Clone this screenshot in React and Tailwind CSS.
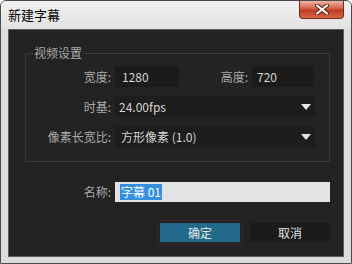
import React from "react";

const font = { fontFamily: '"Noto Sans CJK SC", "Noto Sans", sans-serif' };

function Caret() {
  return (
    <svg width="10" height="6" viewBox="0 0 10 6" className="block">
      <path d="M0 0 L10 0 L5 6 Z" fill="#e6e6e6" />
    </svg>
  );
}

function Label({ children, w = "w-[85px]" }) {
  return (
    <div className={`${w} shrink-0 text-right text-[12px] leading-none text-[#a9a9a9]`}>{children}</div>
  );
}

export default function App() {
  return (
    <div
      className="w-[352px] h-[264px] bg-[#dcdcdc] border border-[#4a4a4a] rounded-t-[6px] flex flex-col overflow-hidden"
      style={font}
    >
      <div className="h-[28px] shrink-0 flex items-start justify-between bg-[linear-gradient(#f0f0f0,#e2e2e2)]">
        <div className="ml-[7px] mt-[6px] text-[13px] leading-[16px] text-black">新建字幕</div>
        <div className="mr-[7px] w-[45px] h-[18px] rounded-b-[4px] border border-t-0 border-[#7a2a1c] bg-[linear-gradient(#eeb3a3,#d76a52_40%,#c03c24_55%,#d56845)] flex items-center justify-center">
          <svg width="14" height="11" viewBox="0 0 14 11">
            <path d="M2 1.5 L12 9.5 M12 1.5 L2 9.5" stroke="#5a1a10" strokeWidth="4" strokeLinecap="round" />
            <path d="M2 1.5 L12 9.5 M12 1.5 L2 9.5" stroke="#ffffff" strokeWidth="2.2" strokeLinecap="round" />
          </svg>
        </div>
      </div>
      <div className="mx-[7px] flex-1 mb-[6px] bg-[#232323] border border-[#5e5e5e] flex flex-col">
        <fieldset className="ml-[16px] mr-[13px] mt-[16px] border border-[#3a3a3a] pt-[6px] pb-[14px] flex flex-col gap-[9px]">
          <legend className="ml-[7px] px-[1px] text-[12px] leading-[14px] text-[#a9a9a9]">视频设置</legend>
          <div className="h-[21px] flex items-center">
            <Label>宽度:</Label>
            <div className="ml-[4px] w-[64px] h-full bg-[#1b1b1b] flex items-center pl-[7px] text-[12px] text-[#d4d4d4]">1280</div>
            <Label w="w-[69px]">高度:</Label>
            <div className="ml-[4px] w-[62px] h-full bg-[#1b1b1b] flex items-center pl-[5px] text-[12px] text-[#d4d4d4]">720</div>
          </div>
          <div className="h-[21px] flex items-center">
            <Label>时基:</Label>
            <div className="ml-[4px] w-[200px] h-full bg-[#1d1d1d] flex items-center justify-between pl-[4px] pr-[4px] text-[12px] text-[#d4d4d4]">
              <span>24.00fps</span>
              <Caret />
            </div>
          </div>
          <div className="h-[21px] flex items-center">
            <Label>像素长宽比:</Label>
            <div className="ml-[4px] w-[200px] h-full bg-[#1d1d1d] flex items-center justify-between pl-[6px] pr-[4px] text-[12px] text-[#d4d4d4]">
              <span>方形像素 (1.0)</span>
              <Caret />
            </div>
          </div>
        </fieldset>
        <div className="mt-[20px] ml-[17px] h-[20px] flex items-center">
          <Label>名称:</Label>
          <div className="ml-[4px] w-[215px] h-full bg-[#e3e3e3] flex items-center pl-[5px]">
            <span className="bg-[#3390e0] text-white text-[12px] leading-[16px] px-[1px]">字幕 01</span>
          </div>
        </div>
        <div className="mt-[21px] mr-[13px] flex justify-end gap-[10px]">
          <div className="w-[80px] h-[19px] bg-[#22698b] flex items-center justify-center text-[12px] text-[#e8e8e8] outline outline-1 outline-offset-[2px] outline-[#3a2626]">确定</div>
          <div className="w-[80px] h-[19px] bg-[#1b1b1b] flex items-center justify-center text-[12px] text-[#e0e0e0]">取消</div>
        </div>
      </div>
    </div>
  );
}
